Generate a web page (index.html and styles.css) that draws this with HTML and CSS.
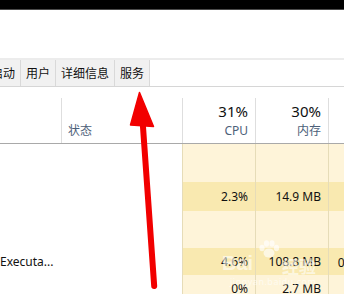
FILE: index.html
```html
<!DOCTYPE html>
<html lang="zh-CN">
<head>
    <meta charset="UTF-8">
    <meta name="viewport" content="width=device-width, initial-scale=1.0">
    <title>任务管理器</title>
    <link rel="stylesheet" href="styles.css">
</head>
<body>
    <div class="window">
        <div class="titlebar"></div>
        <div class="toolbar"></div>
        <div class="tabs">
            <div class="tab tab-first">启动</div>
            <div class="tab">用户</div>
            <div class="tab">详细信息</div>
            <div class="tab">服务</div>
        </div>

        <div class="header">
            <div class="hcell"></div>
            <div class="hcell hcell-status"><span class="label">状态</span></div>
            <div class="hcell hcell-num"><span class="pct">31%</span><span class="label">CPU</span></div>
            <div class="hcell hcell-num"><span class="pct">30%</span><span class="label">内存</span></div>
            <div class="hcell hcell-num"></div>
        </div>

        <div class="rows">
            <div class="row row-light row-h38">
                <div class="cell"></div><div class="cell"></div>
                <div class="cell num"></div><div class="cell num"></div><div class="cell num"></div>
            </div>
            <div class="row row-dark row-h29">
                <div class="cell"></div><div class="cell"></div>
                <div class="cell num">2.3%</div><div class="cell num">14.9 MB</div><div class="cell num"></div>
            </div>
            <div class="row row-light row-h37">
                <div class="cell"></div><div class="cell"></div>
                <div class="cell num"></div><div class="cell num"></div><div class="cell num"></div>
            </div>
            <div class="row row-dark row-h27">
                <div class="cell name">Executa...</div><div class="cell"></div>
                <div class="cell num">4.6%</div><div class="cell num">108.8 MB</div><div class="cell num">0.1 MB/秒</div>
            </div>
            <div class="row row-light row-h27">
                <div class="cell"></div><div class="cell"></div>
                <div class="cell num">0%</div><div class="cell num">2.7 MB</div><div class="cell num">0 MB/秒</div>
            </div>
        </div>

        <div class="watermark">
            <span class="wm-bai">Bai</span>
            <svg class="wm-paw" width="22" height="18" viewBox="0 0 22 18">
                <ellipse cx="4" cy="8" rx="2.6" ry="3.2"/>
                <ellipse cx="8.5" cy="3.5" rx="2.6" ry="3.2"/>
                <ellipse cx="14" cy="3.5" rx="2.6" ry="3.2"/>
                <ellipse cx="18.5" cy="8" rx="2.6" ry="3.2"/>
                <ellipse cx="11" cy="13" rx="5.5" ry="4.5"/>
            </svg>
            <span class="wm-jy">经验</span>
            <span class="wm-url">jingyan.baidu.com</span>
        </div>

        <svg class="arrow" width="344" height="294" viewBox="0 0 344 294">
            <path d="M139.5 92.5 L130.5 125 L153.5 126.5 Z" fill="#f20000" stroke="#f20000" stroke-width="1.5" stroke-linejoin="round"/>
            <path d="M142.8 124 L154.2 286" stroke="#f20000" stroke-width="6" stroke-linecap="round"/>
        </svg>
    </div>
</body>
</html>
```

FILE: styles.css
```css
body {
    margin: 0;
    font-family: "Noto Sans", "Noto Sans CJK SC", sans-serif;
    background: #fff;
}
.window {
    width: 344px;
    height: 294px;
    overflow: hidden;
    position: relative;
}
.titlebar {
    height: 9px;
    background: #000;
    border-bottom: 1px solid #4a4a4a;
}
.toolbar {
    height: 48px;
    background: #fff;
}
.tabs {
    display: flex;
    height: 26px;
    border-top: 2px solid #ececec;
    border-bottom: 1px solid #d6d6d6;
}
.tab {
    padding: 0 5px;
    font-size: 12px;
    line-height: 27px;
    color: #111;
    background: #f1f1f1;
    border-right: 1px solid #d9d9d9;
    white-space: nowrap;
}
.tab-first {
    margin-left: -14px;
}
.header {
    display: grid;
    grid-template-columns: 61px 121px 73px 73px 72px;
    padding-top: 11px;
    border-bottom: 1px solid #a9a9a9;
}
.hcell {
    height: 45px;
    display: flex;
    flex-direction: column;
    justify-content: flex-end;
    padding-bottom: 4px;
    box-sizing: border-box;
    border-left: 1px solid #dedede;
}
.hcell:first-child {
    border-left: none;
}
.hcell-status {
    padding-left: 6px;
}
.hcell-num {
    align-items: flex-end;
    padding-right: 7px;
}
.pct {
    font-size: 15px;
    line-height: 20px;
    margin-bottom: 2px;
    color: #111;
}
.label {
    font-size: 12px;
    line-height: 16px;
    color: #4c6079;
}
.row {
    display: grid;
    grid-template-columns: 61px 121px 73px 73px 72px;
}
.row-h38 { height: 38px; }
.row-h37 { height: 37px; }
.row-h29 { height: 29px; }
.row-h27 { height: 27px; }
.cell {
    font-size: 12px;
    color: #111;
    display: flex;
    align-items: center;
    white-space: nowrap;
    overflow: hidden;
}
.cell.num {
    justify-content: flex-end;
    padding-right: 7px;
    border-left: 1px solid #e6dcb8;
}
.row-light .cell.num {
    background: #fef4d9;
}
.row-dark .cell.num {
    background: #f9e9b0;
}
.cell.name {
    padding-left: 0;
}
.watermark {
    position: absolute;
    left: 222px;
    top: 238px;
    width: 110px;
    height: 50px;
    color: rgba(255, 255, 255, 0.6);
}
.wm-bai {
    position: absolute;
    left: 0;
    top: 14px;
    font: bold 20px "Liberation Sans", sans-serif;
}
.wm-paw {
    position: absolute;
    left: 36px;
    top: 2px;
    fill: rgba(255, 255, 255, 0.65);
}
.wm-jy {
    position: absolute;
    left: 60px;
    top: 15px;
    font-size: 17px;
    font-weight: bold;
}
.wm-url {
    position: absolute;
    left: 8px;
    top: 37px;
    font-size: 9px;
    letter-spacing: 0.5px;
}
.arrow {
    position: absolute;
    left: 0;
    top: 0;
}
```
